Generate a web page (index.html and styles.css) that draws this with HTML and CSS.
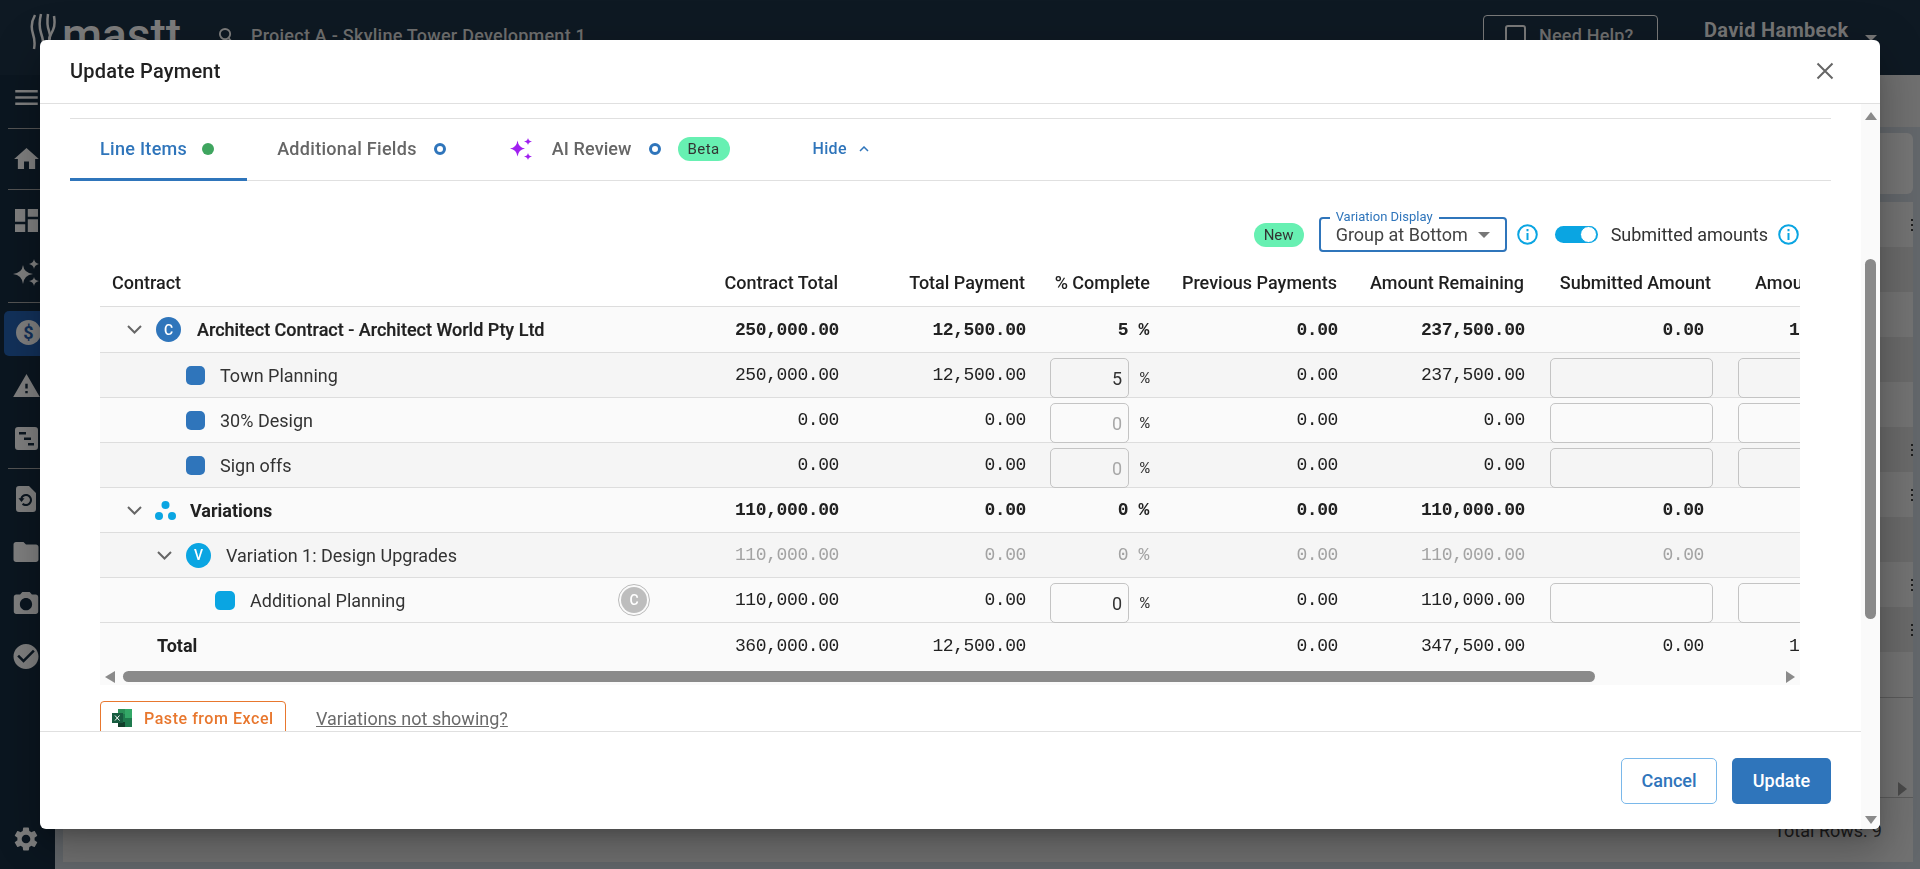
FILE: index.html
```html
<!DOCTYPE html>
<html lang="en">
<head>
<meta charset="utf-8">
<title>Update Payment</title>
<link rel="stylesheet" href="styles.css">
</head>
<body>
<div class="app">
  <header class="topbar">
    <div class="logo">
      <svg class="logo-mark" viewBox="0 0 26 38" width="26" height="38" fill="none" stroke="#7d7d7d" stroke-width="2.500"><path d="M5 2C1 9 1 15 3 21s2 10 1 15"/><path d="M11 1c-2 8-2 13 0 19s3 10 1 17"/><path d="M18 1c-1 7-1 12 1 17s1 10-3 15"/><path d="M24 3c1 6 1 10-1 14s-3 6-4 9"/></svg>
      <span class="logo-text">mastt</span>
    </div>
    <div class="project">
      <svg viewBox="0 0 16 18" width="15" height="17" fill="none" stroke="#7d7d7d" stroke-width="2"><circle cx="7.5" cy="7.5" r="5.5"/><path d="M11.5 12l3.500 4"/></svg>
      <span>Project A - Skyline Tower Development 1</span>
    </div>
    <div class="help"><span class="help-box"></span><span>Need Help?</span></div>
    <div class="user"><span>David Hambeck</span><i class="user-caret"></i></div>
  </header>
  <div class="shell">
    <nav class="sidebar">
      <svg class="nav-icon nav-menu" viewBox="3 6 18 12"><path d="M3 18h18v-2H3v2zm0-5h18v-2H3v2zm0-7v2h18V6H3z"/></svg>
      <hr class="nav-rule nav-rule-a">
      <svg class="nav-icon nav-home" viewBox="2 3 20 17"><path d="M10 20v-6h4v6h5v-8h3L12 3 2 12h3v8z"/></svg>
      <hr class="nav-rule nav-rule-b">
      <svg class="nav-icon nav-dash" viewBox="3 3 18 18"><path d="M3 13h8V3H3v10zm0 8h8v-6H3v6zm10 0h8V11h-8v10zm0-18v6h8V3h-8z"/></svg>
      <svg class="nav-icon nav-spark" viewBox="0 0 27 27"><path d="M10 6Q11 14 20 15 11 16 10 25 9 16 0 15 9 14 10 6ZM21 0Q21.500 4 26 5 21.500 6 21 10 20.500 6 16 5 20.500 4 21 0ZM21 18Q21.500 21.500 26 22 21.500 23 21 27 20.500 23 16 22 20.500 21.500 21 18Z"/></svg>
      <hr class="nav-rule nav-rule-c">
      <div class="nav-active"><span class="nav-dollar">$</span></div>
      <svg class="nav-icon nav-warn" viewBox="1 2 22 19"><path d="M1 21h22L12 2 1 21zm12-3h-2v-2h2v2zm0-4h-2v-4h2v4z"/></svg>
      <svg class="nav-icon nav-plan" viewBox="0 0 23 23"><path fill-rule="evenodd" d="M3 0h17a3 3 0 0 1 3 3v17a3 3 0 0 1-3 3H3a3 3 0 0 1-3-3V3a3 3 0 0 1 3-3zm1 5v2.500h7V5zm5 5.500V13h7v-2.500zm4 5.500v2.500h6V16z"/></svg>
      <hr class="nav-rule nav-rule-d">
      <svg class="nav-icon nav-doc" viewBox="0 0 20 26"><path fill-rule="evenodd" d="M3 0h10l7 7v16a3 3 0 0 1-3 3H3a3 3 0 0 1-3-3V3a3 3 0 0 1 3-3zm7 8c-3 0-5 2-5.600 4.200H2.500L5.500 16l3-3.800H6.600C7 11 8.300 10 10 10c2.200 0 4 1.800 4 4s-1.800 4-4 4c-1 0-2-.4-2.700-1l-1.400 1.400C6.900 19.400 8.400 20 10 20c3.300 0 6-2.700 6-6s-2.700-6-6-6z"/></svg>
      <svg class="nav-icon nav-folder" viewBox="2 4 20 16"><path d="M10 4H4c-1.100 0-1.990.9-1.990 2L2 18c0 1.100.9 2 2 2h16c1.100 0 2-.9 2-2V8c0-1.100-.9-2-2-2h-8l-2-2z"/></svg>
      <svg class="nav-icon nav-cam" viewBox="2 2 20 18"><path d="M9 2L7.170 4H4c-1.100 0-2 .9-2 2v12c0 1.100.9 2 2 2h16c1.100 0 2-.9 2-2V6c0-1.100-.9-2-2-2h-3.170L15 2H9zm3 15c-2.760 0-5-2.240-5-5s2.240-5 5-5 5 2.240 5 5-2.240 5-5 5z"/></svg>
      <svg class="nav-icon nav-check" viewBox="2 2 20 20"><path d="M12 2C6.480 2 2 6.480 2 12s4.480 10 10 10 10-4.480 10-10S17.520 2 12 2zm-2 15l-5-5 1.410-1.410L10 14.170l7.590-7.590L19 8l-9 9z"/></svg>
      <svg class="nav-icon nav-gear" viewBox="2.500 2 19 20"><path d="M19.140 12.940c.04-.3.06-.61.06-.94 0-.32-.02-.64-.07-.94l2.030-1.580c.18-.14.23-.41.12-.61l-1.920-3.320c-.12-.22-.37-.29-.59-.22l-2.390.96c-.5-.38-1.030-.7-1.620-.94l-.36-2.540c-.04-.24-.24-.41-.48-.41h-3.840c-.24 0-.43.17-.47.41l-.36 2.540c-.59.24-1.130.57-1.620.94l-2.390-.96c-.22-.08-.47 0-.59.22L2.740 8.870c-.12.21-.08.47.12.61l2.030 1.580c-.05.3-.09.63-.09.94s.02.64.07.94l-2.030 1.580c-.18.14-.23.41-.12.61l1.920 3.320c.12.22.37.29.59.22l2.390-.96c.5.38 1.030.7 1.620.94l.36 2.540c.05.24.24.41.48.41h3.840c.24 0 .44-.17.47-.41l.36-2.540c.59-.24 1.130-.56 1.620-.94l2.390.96c.22.08.47 0 .59-.22l1.920-3.320c.12-.22.07-.47-.12-.61l-2.010-1.580zM12 15.600c-1.980 0-3.600-1.620-3.600-3.600s1.620-3.600 3.600-3.600 3.600 1.620 3.600 3.600-1.620 3.600-3.600 3.600z"/></svg>
    </nav>
    <main class="page">
      <div class="page-head"></div>
      <div class="page-card"></div>
      <div class="page-table">
        <div class="page-row"><i class="dots"></i></div>
        <div class="page-row dark"></div>
        <div class="page-row"></div>
        <div class="page-row dark"></div>
        <div class="page-row"></div>
        <div class="page-row dark"><i class="dots"></i></div>
        <div class="page-row"><i class="dots"></i></div>
        <div class="page-row dark"></div>
        <div class="page-row"><i class="dots"></i></div>
        <div class="page-row dark"><i class="dots"></i></div>
        <div class="page-row"></div>
        <div class="page-scroll"><i class="page-arrow"></i></div>
      </div>
      <div class="page-foot"><span>Total Rows: 9</span></div>
    </main>
  </div>
</div>

<div class="modal">
  <div class="modal-head">
    <h2>Update Payment</h2>
    <svg class="close" viewBox="0 0 18 18" width="18" height="18" fill="none" stroke="#666" stroke-width="2"><path d="M1.500 1.500l15 15M16.500 1.500l-15 15"/></svg>
  </div>
  <div class="modal-main">
    <div class="modal-col">
      <div class="modal-content">
        <div class="tabs">
          <div class="tab active">Line Items<i class="dot-green"></i></div>
          <div class="tab">Additional Fields<i class="ring"></i></div>
          <div class="tab tab-ai">
            <svg viewBox="0 0 22 22" width="22" height="22" fill="#a020f0"><path d="M7.500 2.500Q8.500 9.500 15 10.500 8.500 11.500 7.500 18.500 6.500 11.500 0 10.500 6.500 9.500 7.500 2.500ZM18 0Q18.500 3 22 3.500 18.500 4 18 7 17.500 4 14 3.500 17.500 3 18 0ZM18 15Q18.500 18 22 18.500 18.500 19 18 22 17.500 19 14 18.500 17.500 18 18 15Z"/></svg>
            <span>AI Review</span><i class="ring"></i><span class="pill pill-beta">Beta</span>
          </div>
          <div class="hide">Hide<svg viewBox="0 0 10 6" width="10" height="6" fill="none" stroke="#2f75bb" stroke-width="1.500"><path d="M1 5l4-4 4 4"/></svg></div>
        </div>

        <div class="toolbar">
          <span class="pill pill-new">New</span>
          <div class="select">
            <span class="select-label">Variation Display</span>
            <span>Group at Bottom</span><i class="select-caret"></i>
          </div>
          <svg class="info" viewBox="0 0 21 21" width="21" height="21" fill="none" stroke="#0aa5e2" stroke-width="2"><circle cx="10.500" cy="10.500" r="9.300"/><path d="M10.500 9v7M10.500 5v2.200"/></svg>
          <div class="toggle"><i></i></div>
          <span class="toggle-text">Submitted amounts</span>
          <svg class="info" viewBox="0 0 21 21" width="21" height="21" fill="none" stroke="#0aa5e2" stroke-width="2"><circle cx="10.500" cy="10.500" r="9.300"/><path d="M10.500 9v7M10.500 5v2.200"/></svg>
        </div>

        <div class="table-wrap">
          <table class="grid">
            <colgroup><col class="c-name"><col class="c-a"><col class="c-b"><col class="c-pct"><col class="c-b"><col class="c-b"><col class="c-b"><col class="c-last"></colgroup>
            <thead>
              <tr><th class="th-name">Contract</th><th>Contract Total</th><th>Total Payment</th><th>% Complete</th><th>Previous Payments</th><th>Amount Remaining</th><th>Submitted Amount</th><th class="th-last">Amount Approved</th></tr>
            </thead>
            <tbody>
              <tr class="bold first">
                <td><div class="name lvl0"><svg class="chev" viewBox="0 0 15 9"><path d="M1 1l6.500 6.500L14 1"/></svg><span class="badge badge-c">C</span><span class="label-c">Architect Contract - Architect World Pty Ltd</span></div></td>
                <td class="num">250,000.00</td><td class="num">12,500.00</td><td class="num pct-text">5 %</td><td class="num">0.00</td><td class="num">237,500.00</td><td class="num sub">0.00</td><td class="num last">12,500.00</td>
              </tr>
              <tr class="alt">
                <td><div class="name lvl1"><i class="sq sq-blue"></i><span>Town Planning</span></div></td>
                <td class="num">250,000.00</td><td class="num">12,500.00</td><td class="pct"><input class="field f-pct" value="5" readonly><span>%</span></td><td class="num">0.00</td><td class="num">237,500.00</td><td class="box"><input class="field f-wide" readonly></td><td class="box last-box"><input class="field f-last" value="12,500.00" readonly></td>
              </tr>
              <tr>
                <td><div class="name lvl1"><i class="sq sq-blue"></i><span>30% Design</span></div></td>
                <td class="num">0.00</td><td class="num">0.00</td><td class="pct"><input class="field f-pct" placeholder="0" readonly><span>%</span></td><td class="num">0.00</td><td class="num">0.00</td><td class="box"><input class="field f-wide" readonly></td><td class="box last-box"><input class="field f-last" readonly></td>
              </tr>
              <tr class="alt">
                <td><div class="name lvl1"><i class="sq sq-blue"></i><span>Sign offs</span></div></td>
                <td class="num">0.00</td><td class="num">0.00</td><td class="pct"><input class="field f-pct" placeholder="0" readonly><span>%</span></td><td class="num">0.00</td><td class="num">0.00</td><td class="box"><input class="field f-wide" readonly></td><td class="box last-box"><input class="field f-last" readonly></td>
              </tr>
              <tr class="bold">
                <td><div class="name lvl0"><svg class="chev" viewBox="0 0 15 9"><path d="M1 1l6.500 6.500L14 1"/></svg><svg class="tri" viewBox="0 0 21 19" width="21" height="19" fill="#0aa5e2"><circle cx="10.500" cy="4" r="4"/><circle cx="4" cy="15" r="4"/><circle cx="17" cy="15" r="4"/></svg><span class="label-v">Variations</span></div></td>
                <td class="num">110,000.00</td><td class="num">0.00</td><td class="num pct-text">0 %</td><td class="num">0.00</td><td class="num">110,000.00</td><td class="num sub">0.00</td><td class="num last"></td>
              </tr>
              <tr class="alt muted">
                <td><div class="name lvl2"><svg class="chev" viewBox="0 0 15 9"><path d="M1 1l6.500 6.500L14 1"/></svg><span class="badge badge-v">V</span><span class="label-vi">Variation 1: Design Upgrades</span></div></td>
                <td class="num">110,000.00</td><td class="num">0.00</td><td class="num pct-text">0 %</td><td class="num">0.00</td><td class="num">110,000.00</td><td class="num sub">0.00</td><td class="num last"></td>
              </tr>
              <tr>
                <td><div class="name lvl3"><i class="sq sq-cyan"></i><span>Additional Planning</span><span class="mini-c">C</span></div></td>
                <td class="num">110,000.00</td><td class="num">0.00</td><td class="pct"><input class="field f-pct" value="0" readonly><span>%</span></td><td class="num">0.00</td><td class="num">110,000.00</td><td class="box"><input class="field f-wide" readonly></td><td class="box last-box"><input class="field f-last" readonly></td>
              </tr>
              <tr class="total">
                <td><div class="name lvl-total">Total</div></td>
                <td class="num">360,000.00</td><td class="num">12,500.00</td><td></td><td class="num">0.00</td><td class="num">347,500.00</td><td class="num sub">0.00</td><td class="num last">12,500.00</td>
              </tr>
            </tbody>
          </table>
          <div class="hscroll"><i class="arrow-left"></i><div class="hthumb"></div><i class="arrow-right"></i></div>
        </div>

        <div class="below">
          <div class="paste">
            <svg viewBox="0 0 20 18" width="20" height="18"><rect x="6" y="0" width="14" height="18" fill="#1f7a4d"/><rect x="13" y="0" width="7" height="9" fill="#33a867"/><rect x="6" y="0" width="7" height="5" fill="#2a9058"/><rect x="6" y="13" width="7" height="5" fill="#123f2b"/><rect x="0" y="4" width="11" height="10" fill="#185c40"/><path d="M3 6.500l4.500 5M7.500 6.500L3 11.500" stroke="#fff" stroke-width="1"/></svg>
            <span>Paste from Excel</span>
          </div>
          <span class="not-showing">Variations not showing?</span>
        </div>
      </div>
      <div class="modal-foot">
        <button class="btn btn-cancel">Cancel</button>
        <button class="btn btn-update">Update</button>
      </div>
    </div>
    <div class="vscroll"><i class="arrow-up"></i><div class="vthumb"></div><i class="arrow-down"></i></div>
  </div>
</div>
</body>
</html>
```
FILE: styles.css
```css
* { box-sizing: border-box; }
html, body { margin: 0; height: 100%; overflow: hidden; }
body { font-family: Roboto, "Liberation Sans", sans-serif; color: #222; font-size: 18px; }

/* ---------- dimmed application behind the dialog ---------- */
.app { height: 869px; display: flex; flex-direction: column; background: #63676b; }
.topbar { height: 75px; background: #0e1923; display: flex; align-items: flex-start; color: #6f6f6f; flex: none; }
.logo { display: flex; align-items: flex-start; margin: 13px 0 0 30px; width: 186px; gap: 6px; }
.logo-text { font-size: 46px; font-weight: 500; line-height: 42px; margin-top: 1px; color: #7d7d7d; }
.project { display: flex; align-items: center; gap: 18px; margin: 25px 0 0 2px; font-weight: 500; letter-spacing: .25px; width: 1265px; white-space: nowrap; }
.help { width: 175px; height: 40px; margin-top: 15px; border: 1px solid #7a7a7a; border-radius: 4px; display: flex; align-items: center; padding: 0 0 0 21px; gap: 13px; font-weight: 500; letter-spacing: .2px; }
.help-box { width: 21px; height: 21px; border: 2px solid #7a7a7a; border-radius: 3px; }
.user { display: flex; margin: 18px 0 0 46px; font-weight: 700; font-size: 20px; gap: 17px; color: #767676; letter-spacing: .3px; }
.user-caret { width: 0; height: 0; margin-top: 17px; border: 6px solid transparent; border-top-color: #767676; border-bottom: 0; }

.shell { flex: 1; display: flex; min-height: 0; }
.sidebar { width: 55px; background: #0b1620; position: relative; flex: none; }
.nav-icon { position: absolute; left: 15px; fill: #808080; width: 23px; height: 23px; }
.nav-menu { top: 15px; height: 15px; }
.nav-home { top: 73px; left: 14px; width: 25px; height: 21px; }
.nav-dash { top: 134px; }
.nav-spark { top: 184px; left: 13px; width: 27px; height: 27px; }
.nav-warn { top: 299px; left: 13px; width: 27px; height: 23px; }
.nav-plan { top: 352px; }
.nav-doc { top: 411px; left: 16px; width: 20px; height: 26px; }
.nav-folder { top: 467px; left: 13px; width: 26px; height: 20px; }
.nav-cam { top: 517px; left: 13px; width: 26px; height: 22px; }
.nav-check { top: 569px; left: 13px; width: 26px; height: 25px; }
.nav-gear { top: 752px; left: 14px; width: 24px; height: 24px; }
.nav-rule { position: absolute; left: 8px; width: 47px; margin: 0; border: 0; border-top: 1px solid #545454; }
.nav-rule-a { top: 53px; }
.nav-rule-b { top: 114px; }
.nav-rule-c { top: 227px; }
.nav-rule-d { top: 393px; }
.nav-active { position: absolute; top: 236px; left: 4px; width: 47px; height: 45px; border-radius: 5px; background: #12315a; }
.nav-dollar { position: absolute; top: 9px; left: 12px; width: 25px; height: 25px; border-radius: 50%; background: #808080; color: #12315a; font-size: 18px; font-weight: 700; text-align: center; line-height: 25px; }

.page { flex: 1; padding: 0 7px 0 8px; display: flex; flex-direction: column; min-width: 0; }
.page-head { height: 52px; flex: none; margin: 0 -7px 6px -8px; background: #707070; }
.page-card { height: 61px; background: #757575; border-radius: 6px; flex: none; }
.page-table { margin-top: 8px; background: #737373; border-radius: 6px 6px 0 0; flex: none; }
.page-row { height: 45px; display: flex; justify-content: flex-end; align-items: center; background: #737373; }
.page-row.dark { background: #6a6a6a; }
.dots { width: 2px; height: 2px; background: #1e1e1e; box-shadow: 0 -5px #1e1e1e, 0 5px #1e1e1e; }
.page-scroll { height: 100px; border-top: 1px solid #5b5b5b; display: flex; justify-content: flex-end; align-items: flex-end; padding: 0 6px 1px 0; }
.page-arrow { width: 0; height: 0; border: 7px solid transparent; border-left: 9px solid #4a4a4a; border-right: 0; }
.page-foot { flex: 1; background: #717171; margin-bottom: 7px; border-top: 1px solid #5b5b5b; display: flex; justify-content: flex-end; padding: 24px 31px 0 0; color: #1d1d1d; }
.page-foot span { line-height: 18px; }

/* ---------- dialog ---------- */
.modal { position: fixed; left: 40px; top: 40px; width: 1840px; height: 789px; background: #fff; border-radius: 6px; display: flex; flex-direction: column; overflow: hidden; box-shadow: 0 11px 15px -7px rgba(0,0,0,.2), 0 24px 38px 3px rgba(0,0,0,.14), 0 9px 46px 8px rgba(0,0,0,.12); }
.modal-head { height: 64px; flex: none; display: flex; align-items: center; justify-content: space-between; padding: 0 46px 1px 30px; border-bottom: 1px solid #e0e0e0; }
.modal-head h2 { margin: 0; font-size: 20px; font-weight: 500; color: #212121; letter-spacing: .2px; }
.modal-main { flex: 1; display: flex; min-height: 0; }
.modal-col { flex: 1; display: flex; flex-direction: column; min-width: 0; }
.modal-content { height: 627px; flex: none; overflow: hidden; padding: 14px 30px 0; }
.modal-foot { flex: 1; border-top: 1px solid #e0e0e0; display: flex; justify-content: flex-end; align-items: flex-start; gap: 15px; padding: 26px 30px 0 0; }

.tabs { height: 63px; border-top: 1px solid #e0e0e0; border-bottom: 1px solid #e0e0e0; display: flex; align-items: stretch; color: #666; font-weight: 500; white-space: nowrap; letter-spacing: .3px; }
.tab { display: flex; align-items: center; padding: 0 30px; gap: 17px; border-bottom: 3px solid transparent; margin-bottom: -1px; }
.tab.active { color: #2f75bb; border-bottom-color: #2f75bb; padding-right: 33px; gap: 15px; }
.tab-ai { gap: 0; padding-left: 34px; letter-spacing: .1px; }
.tab-ai span:first-of-type { margin-left: 20px; }
.dot-green { width: 12px; height: 12px; border-radius: 50%; background: #3fa55f; }
.ring { width: 12px; height: 12px; border-radius: 50%; border: 3px solid #2f75bb; }
.tab-ai .ring { margin-left: 17px; }
.pill { border-radius: 12px; background: #67f0b2; color: #333; font-size: 15px; font-weight: 400; display: inline-flex; align-items: center; justify-content: center; height: 24px; }
.pill-beta { width: 52px; margin-left: 17px; letter-spacing: .4px; }
.pill-new { width: 50px; letter-spacing: 0; }
.hide { display: flex; align-items: center; gap: 12px; color: #2f75bb; font-size: 16px; letter-spacing: .3px; margin-left: 53px; margin-bottom: 2px; }

.toolbar { display: flex; align-items: center; justify-content: flex-end; margin-top: 36px; padding-right: 32px; height: 35px; color: #333; white-space: nowrap; }
.select { position: relative; width: 188px; height: 35px; border: 2px solid #2f75bb; border-radius: 4px; display: flex; align-items: center; padding: 0 0 0 15px; margin: 0 10px 0 15px; color: #444; }
.select-label { position: absolute; top: -9px; left: 9px; background: #fff; padding: 0 6px; font-size: 13px; line-height: 13px; color: #2f75bb; }
.select-caret { width: 0; height: 0; margin-left: 10px; border: 6px solid transparent; border-top-color: #777; border-bottom: 0; }
.toggle { width: 43px; height: 17px; border-radius: 9px; background: #0aa5e2; margin: 0 13px 0 17px; position: relative; }
.toggle i { position: absolute; right: 1px; top: 0; width: 17px; height: 17px; border-radius: 50%; background: #fff; border: 1px solid #0aa5e2; }
.toggle-text { margin-right: 10px; letter-spacing: -.02px; }

.table-wrap { margin: 10px 31px 0 30px; overflow: hidden; }
.grid { border-collapse: separate; border-spacing: 0; table-layout: fixed; width: 1799px; }
.c-name { width: 560px; }
.c-a { width: 190px; }
.c-b { width: 187px; }
.c-pct { width: 125px; }
.c-last { width: 176px; }
.grid th { height: 45px; text-align: right; padding: 0 12px 3px 0; font-weight: 500; font-size: 18px; color: #1f1f1f; border-bottom: 1px solid #ddd; white-space: nowrap; }
.grid .th-name { text-align: left; padding-left: 12px; }
.grid .th-last { text-align: left; padding-left: 32px; }
.grid td { height: 45px; padding: 0; border-bottom: 1px solid #ddd; background: #fafafa; white-space: nowrap; }
.grid tr.first td { height: 46px; }
.grid tr.alt td { background: #f5f5f5; }
.grid tr.total td { border-bottom: 0; }
.num { font-family: "Liberation Mono", monospace; font-size: 18px; letter-spacing: -.4px; text-align: right; padding-right: 11px !important; }
.bold .num { font-weight: 700; }
.bold .name { font-weight: 700; }
.muted .num { color: #a3a3a3; }
.num.sub { padding-right: 19px !important; }
.num.last { text-align: left; padding-left: 66px !important; }
.pct-text { padding-right: 13px !important; }

.name { display: flex; align-items: center; height: 44px; color: #333; }
.lvl0 { padding-left: 27px; color: #212121; }
.lvl1 { padding-left: 86px; }
.lvl2 { padding-left: 57px; }
.lvl3 { padding-left: 115px; padding-right: 10px; }
.lvl-total { padding-left: 57px; font-weight: 700; color: #212121; }
.chev { width: 15px; height: 9px; fill: none; stroke: #666; stroke-width: 2; flex: none; }
.badge { width: 25px; height: 25px; border-radius: 50%; color: #fff; font-size: 14px; font-weight: 500; display: flex; align-items: center; justify-content: center; flex: none; margin-left: 14px; }
.badge-c { background: #2f75bb; }
.badge-v { background: #0aa5e2; }
.tri { margin-left: 13px; flex: none; }
.label-c { margin-left: 16px; font-weight: 500; -webkit-text-stroke: .2px #212121; }
.label-v { margin-left: 14px; }
.label-vi { margin-left: 15px; }
.sq { width: 19px; height: 19px; border-radius: 5px; flex: none; margin-right: 15px; }
.sq-blue { background: #2f75bb; }
.sq-cyan { background: #0aa5e2; width: 20px; }
.mini-c { margin-left: auto; width: 32px; height: 32px; border-radius: 50%; border: 1px solid #bbb; padding: 2px; background: #bdbdbd content-box; color: #fff; font-size: 14px; font-weight: 500; text-align: center; line-height: 26px; }

.pct { vertical-align: top; padding: 5px 0 0 13px !important; }
.pct span { display: inline-block; vertical-align: top; height: 39px; margin-left: 11px; line-height: 42px; color: #333; font-family: "Liberation Mono", monospace; font-size: 16px; }
.box { vertical-align: top; padding: 5px 0 0 14px !important; }
.last-box { padding-left: 15px !important; }
.field { height: 40px; margin: 0 0 -1px; border: 1px solid #c4c4c4; border-radius: 5px; background: transparent; font: 18px Roboto, sans-serif; color: #333; text-align: right; padding: 0 6px 0 0; display: inline-block; vertical-align: top; outline: 0; }
.field::placeholder { color: #a8a8a8; opacity: 1; }
.f-pct { width: 79px; }
.f-wide { width: 163px; }
.f-last { width: 162px; padding-right: 20px; color: #999; }

.hscroll { height: 17px; background: #fafafa; display: flex; align-items: flex-start; padding: 3px 0 0 5px; }
.arrow-left { width: 0; height: 0; border: 6px solid transparent; border-right: 10px solid #8a8a8a; border-left: 0; }
.hthumb { width: 1472px; height: 11px; border-radius: 6px; background: #8a8a8a; margin-left: 8px; }
.arrow-right { width: 0; height: 0; margin-left: 191px; border: 6px solid transparent; border-left: 9px solid #8a8a8a; border-right: 0; }

.below { display: flex; align-items: flex-start; margin: 16px 0 0 30px; }
.paste { width: 186px; height: 42px; border: 1px solid #e8772e; border-radius: 4px; display: flex; align-items: flex-start; padding: 7px 0 0 11px; gap: 12px; color: #e8772e; font-size: 16px; font-weight: 500; letter-spacing: .55px; }
.not-showing { margin: 8px 0 0 30px; color: #6b6b6b; text-decoration: underline; line-height: 20px; }

.btn { height: 46px; border-radius: 5px; font: 500 18px Roboto, sans-serif; padding: 0 0 2px; }
.btn-cancel { width: 96px; background: #fff; border: 1px solid #7ab8ea; color: #2f75bb; }
.btn-update { width: 99px; background: #2f75bb; border: 0; color: #fff; }

.vscroll { width: 19px; flex: none; background: #fafafa; display: flex; flex-direction: column; align-items: center; padding-top: 8px; }
.arrow-up { width: 0; height: 0; border: 6.500px solid transparent; border-bottom: 8px solid #8a8a8a; border-top: 0; }
.vthumb { width: 11px; height: 360px; border-radius: 6px; background: #8a8a8a; margin-top: 139px; }
.arrow-down { width: 0; height: 0; margin-top: 197px; border: 6.500px solid transparent; border-top: 8px solid #8a8a8a; border-bottom: 0; }
```
